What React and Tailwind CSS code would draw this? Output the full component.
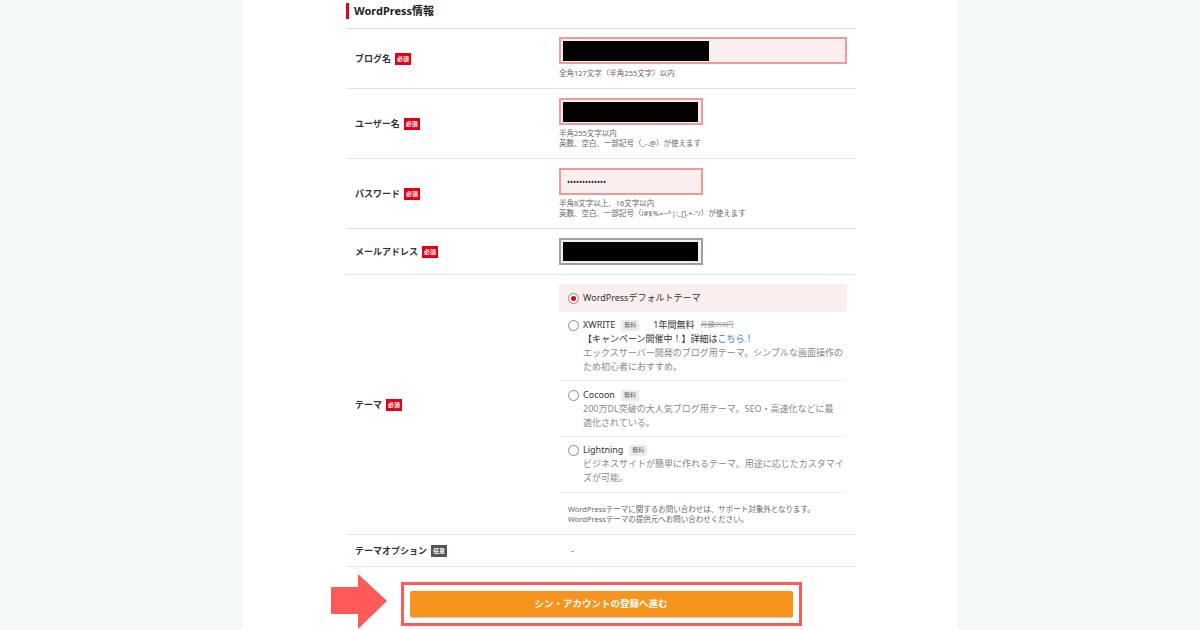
import React from "react";

const F = { fontFamily: '"Noto Sans", "Noto Sans CJK JP", sans-serif' };

function Req() {
  return (
    <span className="ml-[4px] inline-flex h-[12px] w-[16px] items-center justify-center bg-[#e60012] text-[6px] font-bold leading-none text-white">
      必須
    </span>
  );
}
function Opt() {
  return (
    <span className="ml-[4px] inline-flex h-[12px] w-[16px] items-center justify-center bg-[#555555] text-[6px] font-bold leading-none text-white">
      任意
    </span>
  );
}
function Free() {
  return (
    <span className="ml-[6px] inline-flex h-[11px] w-[18px] items-center justify-center bg-[#ececec] text-[6px] leading-none text-[#666]">
      無料
    </span>
  );
}

function Label({ children }) {
  return (
    <div className="flex w-[213px] shrink-0 items-center pl-[9px] text-[9px] font-bold text-[#333]">
      {children}
    </div>
  );
}

function Radio({ checked }) {
  return (
    <span className="flex h-[11px] w-[11px] shrink-0 items-center justify-center rounded-full border border-[#8a8a8a] bg-white">
      {checked && <span className="h-[5px] w-[5px] rounded-full bg-[#e60012]" />}
    </span>
  );
}

export default function App() {
  return (
    <div className="flex min-h-[630px] w-full justify-center bg-[#f4f8f8] text-[#333]" style={F}>
      <div className="w-[714px] bg-white pl-[103px] pr-[101px]">
        {/* heading */}
        <div className="flex h-[28px] items-start gap-[5px] pt-[3px]">
          <span className="h-[16px] w-[3px] bg-[#e60012]" />
          <span className="text-[11px] font-bold leading-[16px] text-[#222]">WordPress情報</span>
        </div>

        {/* ブログ名 */}
        <div className="flex border-t border-[#e3e3e3]">
          <Label>
            ブログ名<Req />
          </Label>
          <div className="w-[297px] pb-[10px] pt-[8px]">
            <div className="flex h-[27px] w-[288px] items-center border-2 border-[#f09a9a] bg-[#fbeeee] pl-[2px]">
              <div className="h-[20px] w-[146px] bg-black" />
            </div>
            <div className="mt-[4px] text-[7.5px] leading-[10px] text-[#666]">全角127文字（半角255文字）以内</div>
          </div>
        </div>

        {/* ユーザー名 */}
        <div className="flex border-t border-[#e3e3e3]">
          <Label>
            ユーザー名<Req />
          </Label>
          <div className="w-[297px] pb-[10px] pt-[9px]">
            <div className="flex h-[27px] w-[144px] items-center border-2 border-[#f09a9a] bg-[#fbeeee] pl-[2px]">
              <div className="h-[20px] w-[135px] bg-black" />
            </div>
            <div className="mt-[3px] text-[7.5px] leading-[10px] text-[#666]">
              <div>半角255文字以内</div>
              <div>英数、空白、一部記号（_-.@）が使えます</div>
            </div>
          </div>
        </div>

        {/* パスワード */}
        <div className="flex border-t border-[#e3e3e3]">
          <Label>
            パスワード<Req />
          </Label>
          <div className="w-[297px] pb-[10px] pt-[9px]">
            <div className="flex h-[27px] w-[144px] items-center border-2 border-[#f09a9a] bg-[#fbeeee] pl-[6px]">
              <span className="text-[8px] leading-none text-[#222]">•••••••••••••</span>
            </div>
            <div className="mt-[3px] text-[7.5px] leading-[10px] text-[#666]">
              <div>半角8文字以上、16文字以内</div>
              <div>英数、空白、一部記号（!#$%=~^|:_[].+-"/）が使えます</div>
            </div>
          </div>
        </div>

        {/* メールアドレス */}
        <div className="flex border-t border-[#e3e3e3]">
          <Label>
            メールアドレス<Req />
          </Label>
          <div className="w-[297px] pb-[9px] pt-[9px]">
            <div className="flex h-[27px] w-[144px] items-center border-2 border-[#a39d9d] bg-[#f6efef] pl-[2px]">
              <div className="h-[19px] w-[135px] bg-black" />
            </div>
          </div>
        </div>

        {/* テーマ */}
        <div className="flex border-t border-[#e3e3e3]">
          <Label>
            テーマ<Req />
          </Label>
          <div className="w-[297px] pb-[10px] pt-[9px]">
            <div className="w-[288px] text-[9px] leading-[14px]">
              <div className="flex h-[28px] items-center gap-[4px] bg-[#fbeeee] pl-[9px] text-[#333]">
                <Radio checked />
                <span>WordPressデフォルトテーマ</span>
              </div>

              <div className="flex gap-[4px] border-b border-[#efefef] pb-[6px] pl-[9px] pt-[6px]">
                <div className="pt-[1.5px]">
                  <Radio />
                </div>
                <div>
                  <div className="flex items-center text-[#333]">
                    XWRITE<Free />
                    <span className="ml-[14px]">1年間無料</span>
                    <span className="ml-[6px] text-[7px] text-[#999] line-through">月額990円</span>
                  </div>
                  <div className="text-[#333]">
                    【キャンペーン開催中！】詳細は<span className="text-[#2a7ae2]">こちら！</span>
                  </div>
                  <div className="text-[#888]">
                    エックスサーバー開発のブログ用テーマ。シンプルな画面操作の
                    <br />
                    ため初心者におすすめ。
                  </div>
                </div>
              </div>

              <div className="flex gap-[4px] border-b border-[#efefef] pb-[6px] pl-[9px] pt-[7px]">
                <div className="pt-[1.5px]">
                  <Radio />
                </div>
                <div>
                  <div className="flex items-center text-[#333]">
                    Cocoon<Free />
                  </div>
                  <div className="text-[#888]">
                    200万DL突破の大人気ブログ用テーマ。SEO・高速化などに最
                    <br />
                    適化されている。
                  </div>
                </div>
              </div>

              <div className="flex gap-[4px] border-b border-[#efefef] pb-[7px] pl-[9px] pt-[6px]">
                <div className="pt-[1.5px]">
                  <Radio />
                </div>
                <div>
                  <div className="flex items-center text-[#333]">
                    Lightning<Free />
                  </div>
                  <div className="text-[#888]">
                    ビジネスサイトが簡単に作れるテーマ。用途に応じたカスタマイ
                    <br />
                    ズが可能。
                  </div>
                </div>
              </div>

              <div className="pl-[9px] pt-[11px] text-[7.5px] leading-[10px] text-[#666]">
                <div>WordPressテーマに関するお問い合わせは、サポート対象外となります。</div>
                <div>WordPressテーマの提供元へお問い合わせください。</div>
              </div>
            </div>
          </div>
        </div>

        {/* テーマオプション */}
        <div className="flex h-[33px] border-y border-[#e3e3e3]">
          <Label>
            テーマオプション<Opt />
          </Label>
          <div className="flex w-[297px] items-center pl-[12px] text-[9px] text-[#666]">-</div>
        </div>

        {/* button */}
        <div className="relative mt-[15px] flex justify-center">
          <svg
            className="absolute left-[-15px] top-[-8px]"
            width="58"
            height="56"
            viewBox="0 0 58 56"
          >
            <polygon points="0,13 27,13 27,0 56,27 27,55 27,40 0,40" fill="#ff5a5a" />
          </svg>
          <div className="border-[3px] border-[#ff5a5a] p-[6px]">
            <button className="flex h-[26px] w-[383px] items-center justify-center rounded-[2px] bg-[#f7941d] text-[9.5px] font-bold text-white shadow-[0_1px_1px_rgba(0,0,0,0.25)]">
              シン・アカウントの登録へ進む
            </button>
          </div>
        </div>
      </div>
    </div>
  );
}
